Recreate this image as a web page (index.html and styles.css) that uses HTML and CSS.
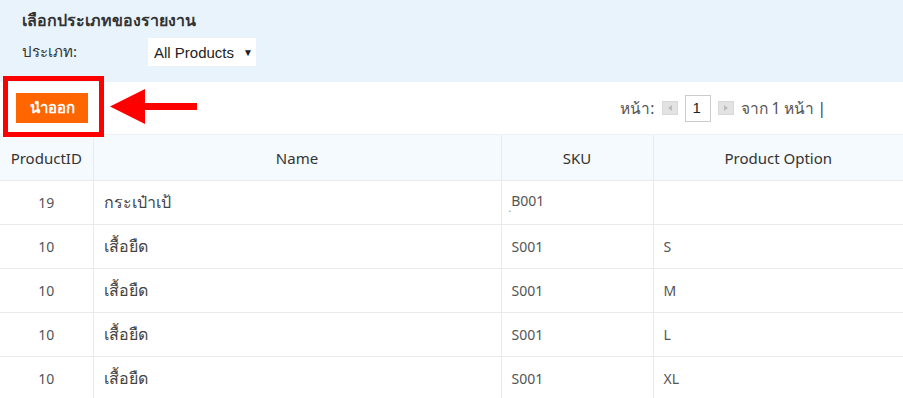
FILE: index.html
```html
<!DOCTYPE html>
<html lang="th">
<head>
<meta charset="utf-8">
<link rel="stylesheet" href="styles.css">
</head>
<body>
<div class="filter">
  <div class="filter-title">เลือกประเภทของรายงาน</div>
  <div class="filter-row">
    <span class="filter-label">ประเภท:</span>
    <div class="select">All Products <span class="caret">▼</span></div>
  </div>
</div>
<div class="toolbar">
  <div class="export-wrap">
    <button class="export">นำออก</button>
    <div class="highlight"></div>
    <svg class="arrow" width="90" height="36" viewBox="0 0 90 36">
      <polygon points="0,17.5 35,0 35,14 87,14 87,21 35,21 35,35" fill="#f00"/>
    </svg>
  </div>
  <div class="pager">
    <span>หน้า:</span>
    <span class="pbtn"><span class="tri-l"></span></span>
    <span class="pinput">1</span>
    <span class="pbtn"><span class="tri-r"></span></span>
    <span>จาก 1 หน้า</span>
    <span class="bar">|</span>
  </div>
</div>
<table class="grid">
  <colgroup><col class="c1"><col class="c2"><col class="c3"><col class="c4"></colgroup>
  <thead>
    <tr><th>ProductID</th><th>Name</th><th>SKU</th><th>Product Option</th></tr>
  </thead>
  <tbody>
    <tr><td class="id">19</td><td class="name">กระเป๋าเป้</td><td><span class="dot">.</span>B001</td><td></td></tr>
    <tr><td class="id">10</td><td class="name">เสื้อยืด</td><td>S001</td><td>S</td></tr>
    <tr><td class="id">10</td><td class="name">เสื้อยืด</td><td>S001</td><td>M</td></tr>
    <tr><td class="id">10</td><td class="name">เสื้อยืด</td><td>S001</td><td>L</td></tr>
    <tr><td class="id">10</td><td class="name">เสื้อยืด</td><td>S001</td><td>XL</td></tr>
  </tbody>
</table>
</body>
</html>
```
FILE: styles.css
```css
html, body { margin: 0; padding: 0; background: #fff; }
body { font-family: "Noto Sans", "Liberation Sans", sans-serif; color: #333; overflow: hidden; }

.filter {
  background: #e8f3fb;
  height: 82px;
  box-sizing: border-box;
  padding: 9px 0 0 22px;
}
.filter-title { font-family: Tahoma, "Noto Sans", sans-serif; font-weight: bold; font-size: 16px; line-height: 22px; color: #333; }
.filter-row { display: flex; align-items: center; margin-top: 7px; }
.filter-label { width: 126px; font-size: 15px; color: #333; }
.select {
  width: 108px; height: 28px; box-sizing: border-box; background: #fff;
  font-family: "Liberation Sans", Arial, sans-serif; font-size: 15px; color: #222;
  display: flex; align-items: center; padding-left: 6px; gap: 9px;
}
.caret { font-size: 10px; }

.toolbar {
  height: 52px; display: flex; align-items: center; justify-content: space-between;
  border-bottom: 1px solid #eef0f2;
}
.export-wrap { position: relative; margin-left: 16px; }
.export {
  width: 72px; height: 30px; border: 0; background: #ff6600; color: #fff;
  font-family: Tahoma, "Noto Sans", sans-serif; font-weight: bold; font-size: 15px;
  display: block; padding: 0;
}
.highlight {
  position: absolute; left: -13px; top: -17px; width: 101px; height: 61px;
  box-sizing: border-box; border: 5px solid #f00;
}
.arrow { position: absolute; left: 94px; top: -4px; }

.pager {
  display: flex; align-items: center; gap: 7px; margin-right: 77px;
  font-size: 15.5px; color: #555;
}
.pbtn {
  width: 16px; height: 14px; background: #e3e3e3; border: 1px solid #d8d8d8; box-sizing: border-box;
  display: flex; align-items: center; justify-content: center;
}
.tri-l { border-right: 4px solid #bbb; border-top: 3px solid transparent; border-bottom: 3px solid transparent; }
.tri-r { border-left: 4px solid #bbb; border-top: 3px solid transparent; border-bottom: 3px solid transparent; }
.pinput {
  width: 26px; height: 27px; box-sizing: border-box; border: 1px solid #ccc; background: #fff;
  font-family: "Liberation Sans", Arial, sans-serif; font-size: 15px; color: #222; padding: 3px 0 0 7px;
}
.bar { color: #3a3550; margin-left: -4px; }

.grid { width: 903px; border-collapse: collapse; table-layout: fixed; }
.c1 { width: 93px; } .c2 { width: 408px; } .c3 { width: 152px; } .c4 { width: 250px; }
.grid th {
  height: 45px; background: #f5fafe; font-weight: normal; font-size: 15px; color: #333;
  border-right: 1px solid #e8ecef; border-bottom: 1px solid #e8ecef; padding: 0;
}
.grid td {
  height: 43px; font-size: 14px; color: #555; padding: 0 0 0 10px;
  border-right: 1px solid #eaeaea; border-bottom: 1px solid #eaeaea;
}
.grid td.name { font-size: 16px; color: #444; }
.grid th:last-child, .grid td:last-child { border-right: 0; }
.grid td.id { text-align: center; padding: 0; }
.dot { font-size: 10px; vertical-align: -6px; margin-left: -3px; color: #888; }
```
